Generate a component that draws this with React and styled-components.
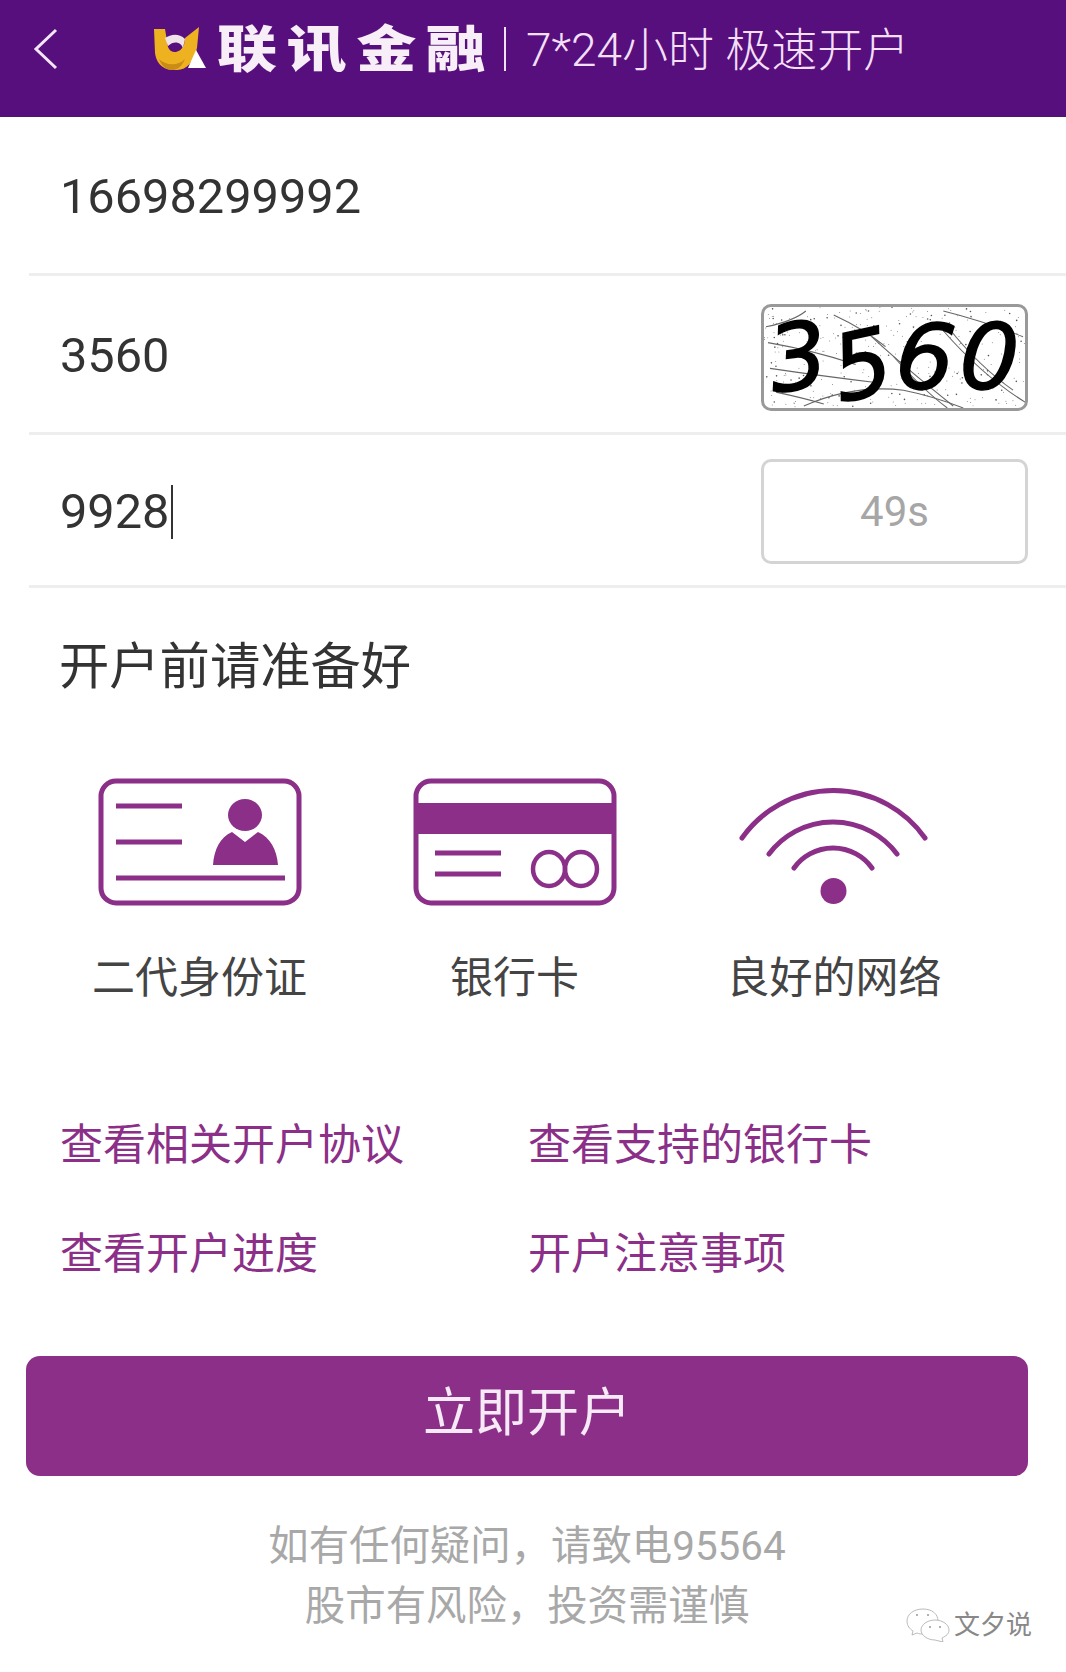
import styled, { createGlobalStyle } from "styled-components";

const GlobalStyle = createGlobalStyle`
  html, body {
    margin: 0;
    padding: 0;
    background: #fff;
  }
  * {
    box-sizing: border-box;
  }
`;

const purple = "#8b2f88";
const fonts = `Roboto, "Noto Sans CJK SC", sans-serif`;

const captchaDigits = [
  { digit: "3", angle: -8, shift: 0 },
  { digit: "5", angle: -12, shift: 8 },
  { digit: "6", angle: 6, shift: 0 },
  { digit: "0", angle: 4, shift: 0 },
];

// captcha background, fixed seed so the picture never changes
function noiseDots() {
  let seed = 17;
  let dots = [];
  for (let i = 0; i < 340; i++) {
    seed = (seed * 9301 + 49297) % 233280;
    let x = (seed / 233280) * 262;
    seed = (seed * 9301 + 49297) % 233280;
    let y = (seed / 233280) * 102;
    dots.push(<circle key={i} cx={x} cy={y} r={i % 4 === 0 ? 0.8 : 0.5} fill="#555" />);
  }
  return dots;
}

function Captcha() {
  return (
    <CaptchaBox>
      <CaptchaNoise viewBox="0 0 262 102" preserveAspectRatio="none">
        {noiseDots()}
        <g fill="none" stroke="#666" strokeWidth="1.1">
          <path d="M2 20 Q30 14 42 4" />
          <path d="M70 8 Q100 22 122 40" />
          <path d="M108 30 Q140 60 190 100" />
          <path d="M180 24 Q220 70 262 96" />
          <path d="M186 22 Q216 60 250 84" />
          <path d="M4 36 Q50 44 92 58" />
          <path d="M6 62 Q60 70 110 76" />
          <path d="M12 86 Q40 92 60 98" />
          <path d="M40 100 Q90 78 140 84 Q170 90 200 102" />
          <path d="M130 50 Q160 84 184 102" />
          <path d="M180 4 Q220 14 260 30" />
        </g>
      </CaptchaNoise>
      <CaptchaDigits>
        {captchaDigits.map((d) => (
          <CaptchaDigit key={d.digit} $angle={d.angle} $shift={d.shift}>
            {d.digit}
          </CaptchaDigit>
        ))}
      </CaptchaDigits>
    </CaptchaBox>
  );
}

function IdCardIcon() {
  return (
    <svg width="204" height="128" viewBox="0 0 204 128">
      <rect x="3" y="3" width="198" height="122" rx="15" fill="none" stroke={purple} strokeWidth="5" />
      <path d="M18 28H84M18 64H84M18 100H187" stroke={purple} strokeWidth="5" fill="none" />
      <ellipse cx="147" cy="37" rx="17" ry="16" fill={purple} />
      <path d="M115 87C116 72 122 59 134 54L147 64L160 54C172 59 179 72 180 87Z" fill={purple} />
    </svg>
  );
}

function BankCardIcon() {
  return (
    <svg width="204" height="128" viewBox="0 0 204 128">
      <rect x="3" y="3" width="198" height="122" rx="15" fill="none" stroke={purple} strokeWidth="5" />
      <rect x="1" y="25" width="202" height="31" fill={purple} />
      <path d="M22 75H88M22 96H88" stroke={purple} strokeWidth="5" fill="none" />
      <ellipse cx="136" cy="91" rx="16" ry="17" fill="none" stroke={purple} strokeWidth="4.5" />
      <ellipse cx="168" cy="91" rx="16" ry="17" fill="none" stroke={purple} strokeWidth="4.5" />
    </svg>
  );
}

function WifiIcon() {
  return (
    <svg width="190" height="128" viewBox="0 -4 190 128">
      <g fill="none" stroke={purple} strokeWidth="5" strokeLinecap="round">
        <path d="M3 56A112 112 0 0 1 186 56" />
        <path d="M30 72A80 80 0 0 1 158 72" />
        <path d="M55 86A48 48 0 0 1 133 86" />
      </g>
      <ellipse cx="94.5" cy="109" rx="13" ry="13" fill={purple} />
    </svg>
  );
}

function Logo() {
  return (
    <svg width="58" height="48" viewBox="10 10 58 48">
      <path
        d="M13 14H24L27 32C29 38 38 40 43 30L44 23L58 12L56 33C53 46 46 55 36 55H30C20 54 15 46 14 38Z"
        fill="#eeb221"
      />
      <path d="M18 44C24 50 36 52 44 44C40 54 34 55 30 55C24 54 20 50 18 44Z" fill="#c98c16" />
      <path
        d="M24 23C30 19 38 18 44 24L42 33C40 27 33 25 27 31C26 28 25 26 24 23Z"
        fill="#efe3ea"
      />
      <path d="M55 35L65 53H47Z" fill="#fff" />
    </svg>
  );
}

function WechatMark() {
  return (
    <svg width="44" height="34" viewBox="0 0 44 34">
      <g fill="#fff" stroke="#aaa" strokeWidth="0.8">
        <path d="M17 1C8 1 1 6 1 13C1 18 4 21 7 23L6 27L11 25C13 26 15 26 17 26C26 26 32 20 32 13C32 6 26 1 17 1Z" />
        <path d="M29 12C21 12 15 17 15 22C15 27 21 32 29 32L37 34L36 30C40 28 43 26 43 22C43 17 37 12 29 12Z" />
      </g>
      <g fill="#999">
        <circle cx="11" cy="7" r="1" />
        <circle cx="22" cy="7" r="1" />
        <circle cx="24" cy="19" r="1" />
        <circle cx="34" cy="19" r="1" />
      </g>
    </svg>
  );
}

export default function App() {
  return (
    <Page>
      <GlobalStyle />
      <Header>
        <BackArrow width="26" height="42" viewBox="0 0 26 42">
          <path d="M23 2L3 21L23 40" fill="none" stroke="#f4e6f6" strokeWidth="3" />
        </BackArrow>
        <Logo />
        <Brand>联讯金融</Brand>
        <Divider />
        <Slogan>7*24小时 极速开户</Slogan>
      </Header>

      <Row $height={159}>
        <RowText>16698299992</RowText>
      </Row>
      <Row $height={159}>
        <RowText>3560</RowText>
        <Captcha />
      </Row>
      <Row $height={153}>
        <RowText>
          9928
          <Caret />
        </RowText>
        <CountDown>49s</CountDown>
      </Row>

      <SectionTitle>开户前请准备好</SectionTitle>

      <Prepare>
        <PrepareItem>
          <IdCardIcon />
          <PrepareLabel>二代身份证</PrepareLabel>
        </PrepareItem>
        <PrepareItem>
          <BankCardIcon />
          <PrepareLabel>银行卡</PrepareLabel>
        </PrepareItem>
        <PrepareItem>
          <WifiIcon />
          <PrepareLabel>良好的网络</PrepareLabel>
        </PrepareItem>
      </Prepare>

      <Links>
        <LinkText>查看相关开户协议</LinkText>
        <LinkText>查看支持的银行卡</LinkText>
        <LinkText>查看开户进度</LinkText>
        <LinkText>开户注意事项</LinkText>
      </Links>

      <OpenButton>立即开户</OpenButton>

      <Notice>
        <NoticeLine>如有任何疑问，请致电95564</NoticeLine>
        <NoticeLine>股市有风险，投资需谨慎</NoticeLine>
      </Notice>

      <Watermark>
        <WechatMark />
        <WatermarkText>文夕说</WatermarkText>
      </Watermark>
    </Page>
  );
}

let Page = styled.div`
  position: relative;
  width: 1066px;
  height: 1672px;
  overflow: hidden;
  background: #fff;
  font-family: ${fonts};
  color: #333;
`;

let Header = styled.header`
  display: flex;
  align-items: center;
  height: 117px;
  padding: 0 0 18px 33px;
  background: #560f7c;
  border-bottom: 1px solid #4a1a66;
`;

let BackArrow = styled.svg`
  flex: none;
  margin-right: 92px;
`;

let Brand = styled.div`
  width: 287px;
  margin-left: 8px;
  padding-top: 2px;
  font-size: 50px;
  font-weight: 900;
  line-height: 60px;
  letter-spacing: 8px;
  color: #f7eef8;
  white-space: nowrap;
  transform: scaleX(1.2);
  transform-origin: left center;
`;

let Divider = styled.div`
  width: 2px;
  height: 44px;
  background: #f0e2f4;
`;

let Slogan = styled.div`
  margin-left: 20px;
  padding-top: 2px;
  font-size: 46px;
  font-weight: 300;
  line-height: 52px;
  color: #f3dff6;
  white-space: nowrap;
`;

let Row = styled.div`
  display: flex;
  align-items: center;
  justify-content: space-between;
  height: ${(p) => p.$height}px;
  margin-left: 29px;
  padding: 3px 38px 0 31px;
  border-bottom: 3px solid #eeeeee;
`;

let RowText = styled.div`
  display: flex;
  align-items: center;
  font-size: 48.7px;
  line-height: 56px;
  color: #333;
`;

let Caret = styled.span`
  display: inline-block;
  width: 2px;
  height: 54px;
  margin-left: 2px;
  background: #333;
`;

let CaptchaBox = styled.div`
  position: relative;
  width: 267px;
  height: 107px;
  margin-top: 4px;
  border: 3px solid #999;
  border-radius: 10px;
  background: #fff;
`;

let CaptchaNoise = styled.svg`
  display: block;
  width: 100%;
  height: 100%;
`;

let CaptchaDigits = styled.div`
  position: absolute;
  inset: 0;
  display: flex;
  align-items: center;
  gap: 5px;
  padding-left: 5px;
`;

let CaptchaDigit = styled.span`
  display: block;
  font-family: "DejaVu Sans", sans-serif;
  font-size: 92px;
  line-height: 92px;
  font-style: italic;
  color: #000;
  -webkit-text-stroke: 1.5px #000;
  transform: translateY(${(p) => p.$shift}px) rotate(${(p) => p.$angle}deg);
`;

let CountDown = styled.div`
  display: flex;
  align-items: center;
  justify-content: center;
  width: 267px;
  height: 105px;
  border: 3px solid #d4d4d4;
  border-radius: 10px;
  font-size: 42px;
  color: #a6a6a6;
`;

let SectionTitle = styled.h2`
  margin: 49px 0 0 59px;
  font-size: 50.3px;
  font-weight: 400;
  line-height: 60px;
  color: #333;
`;

let Prepare = styled.div`
  display: grid;
  grid-template-columns: 315px 315px 324px;
  margin-top: 81px;
  padding-left: 42px;
`;

let PrepareItem = styled.div`
  display: flex;
  flex-direction: column;
  align-items: center;
`;

let PrepareLabel = styled.div`
  margin-top: 44px;
  font-size: 43px;
  line-height: 56px;
  color: #444;
`;

let Links = styled.div`
  display: grid;
  grid-template-columns: 468px 468px;
  grid-auto-rows: 109px;
  margin-top: 111px;
  padding-left: 60px;
`;

let LinkText = styled.div`
  font-size: 43px;
  line-height: 56px;
  color: ${purple};
`;

let OpenButton = styled.button`
  display: block;
  width: 1002px;
  height: 120px;
  margin: 21px 0 0 26px;
  padding: 0 0 16px;
  border: none;
  border-radius: 14px;
  background: ${purple};
  font-family: ${fonts};
  font-size: 52px;
  color: #f6eaf6;
`;

let Notice = styled.div`
  margin: 41px 0 0 -12px;
  text-align: center;
`;

let NoticeLine = styled.div`
  font-size: 40.4px;
  line-height: 60px;
  color: #a8a8a8;
`;

let Watermark = styled.div`
  position: absolute;
  left: 906px;
  top: 1608px;
  display: flex;
  align-items: center;
  gap: 4px;
`;

let WatermarkText = styled.span`
  font-size: 26px;
  line-height: 32px;
  color: #888;
`;
